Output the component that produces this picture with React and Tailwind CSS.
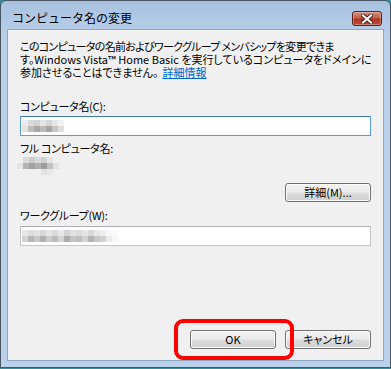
import React from "react";

const jp = "[font-family:'Noto_Sans_CJK_JP','Noto_Sans',sans-serif]";

const Mosaic = ({ rows, className = "" }) => {
  return (
    <div className={`flex flex-col ${className}`}>
      {rows.map((row, i) => (
        <div key={i} className="flex">
          {row.map((c, j) => (
            <div key={j} className="w-[6px] h-[6px]" style={{ backgroundColor: c }} />
          ))}
        </div>
      ))}
    </div>
  );
};

const WinButton = ({ children }) => {
  return (
    <button className="w-[86px] h-[19px] rounded-[3px] border border-[#707070] bg-[linear-gradient(to_bottom,#f2f2f2_0%,#ebebeb_48%,#dddddd_52%,#cfcfcf_100%)] shadow-[inset_0_0_0_1px_#fbfbfb] text-[11px] leading-[17px] text-black [font-feature-settings:'palt']">
      {children}
    </button>
  );
};

const TextBox = ({ focused, children }) => {
  return (
    <div
      className={`h-[20px] w-full bg-white border ${
        focused ? "border-[#569de5] border-t-[#3d7bad]" : "border-[#c5c5c5] border-t-[#abadb3]"
      } flex items-center pl-[1px]`}
    >
      {children}
    </div>
  );
};

const App = () => {
  return (
    <div className={`w-[391px] h-[369px] bg-[#3a8c96] ${jp}`}>
      <div className="relative w-[391px] h-[368px] border border-[#4a5564] rounded-t-[6px] bg-[linear-gradient(to_bottom,#a8c1de_0px,#b6cde8_28px,#b9d1ea_40px)] flex flex-col">
        {/* title bar */}
        <div className="h-[28px] flex items-start justify-between pt-[10px] pl-[11px] pr-[8px]">
          <span className="text-[12px] leading-[14px] text-black">コンピュータ名の変更</span>
          <div className="w-[30px] h-[15px] rounded-[3px] border border-[#5b1e18] bg-[linear-gradient(to_bottom,#d98b7b_0%,#c4604d_45%,#a8351f_55%,#b9503b_100%)] flex items-center justify-center shadow-[inset_0_0_0_1px_rgba(255,255,255,0.3)]">
            <svg width="12" height="10" viewBox="0 0 12 10">
              <path d="M2 1.5 L10 8.5 M10 1.5 L2 8.5" stroke="#4a1a12" strokeWidth="4" strokeLinecap="square" />
              <path d="M2 1.5 L10 8.5 M10 1.5 L2 8.5" stroke="#ffffff" strokeWidth="2.2" strokeLinecap="square" />
            </svg>
          </div>
        </div>

        {/* client area */}
        <div className="relative mx-[6px] h-[332px] border border-[#8ea6c1] bg-[#f0f0f0] flex flex-col px-[12px] pt-[10px] pb-[11px] text-[11px] leading-[13px] text-black [font-feature-settings:'palt']">
          <div className="whitespace-nowrap">
            <div className="tracking-[-0.7px]">このコンピュータの名前およびワークグループ メンバシップを変更できま</div>
            <div>す。Windows Vista™ Home Basic を実行しているコンピュータをドメインに</div>
            <div>
              参加させることはできません。
              <a href="#" className="ml-[4px] text-[#0066cc] underline">詳細情報</a>
            </div>
          </div>

          <div className="mt-[21px] tracking-[-0.3px]">コンピュータ名(C):</div>
          <div className="mt-[3px]">
            <TextBox focused>
              <Mosaic
                rows={[
                  ["#ececec", "#dcdcdc", "#d4d4d4", "#e4e4e4", "#d6d6d6", "#e6e6e6", "#f2f2f2"],
                  ["#e2e2e2", "#bcbcbc", "#a8a8a8", "#bababa", "#a4a4a4", "#c6c6c6", "#dedede"],
                ]}
              />
            </TextBox>
          </div>

          <div className="mt-[6px] tracking-[-0.3px]">フル コンピュータ名:</div>
          <Mosaic
            className="mt-[2px] -ml-[3px]"
            rows={[
              ["#f0f0f0", "#dadada", "#cacaca", "#d8d8d8", "#cfcfcf", "#e4e4e4", "#f0f0f0"],
              ["#e4e4e4", "#b4b4b4", "#a2a2a2", "#b0b0b0", "#9e9e9e", "#c2c2c2", "#e2e2e2"],
              ["#f0f0f0", "#f0f0f0", "#f0f0f0", "#f0f0f0", "#e2e2e2", "#e8e8e8", "#f0f0f0"],
            ]}
          />

          <div className="mt-[8px] flex justify-end">
            <WinButton>詳細(M)...</WinButton>
          </div>

          <div className="mt-[7px] tracking-[-0.3px]">ワークグループ(W):</div>
          <div className="mt-[4px]">
            <TextBox>
              <Mosaic
                rows={[
                  ["#e8e8e8", "#dcdcdc", "#e4e4e4", "#d8d8d8", "#e6e6e6", "#dadada", "#e8e8e8", "#d4d4d4", "#e2e2e2", "#dcdcdc", "#e6e6e6", "#d8d8d8", "#e8e8e8", "#eeeeee", "#f6f6f6", "#fbfbfb"],
                  ["#d2d2d2", "#b6b6b6", "#c8c8c8", "#b2b2b2", "#cccccc", "#bcbcbc", "#d4d4d4", "#acacac", "#c4c4c4", "#bebebe", "#d2d2d2", "#b4b4b4", "#c8c8c8", "#d0d0d0", "#ececec", "#f8f8f8"],
                ]}
              />
            </TextBox>
          </div>

          <div className="mt-auto flex justify-end gap-[9px]">
            <WinButton>OK</WinButton>
            <WinButton>キャンセル</WinButton>
          </div>

          {/* red highlight around OK */}
          <div className="absolute left-[166px] top-[289px] w-[120px] h-[41px] border-[4px] border-[#ff0000] rounded-[9px]" />
        </div>
      </div>
    </div>
  );
};

export default App;
